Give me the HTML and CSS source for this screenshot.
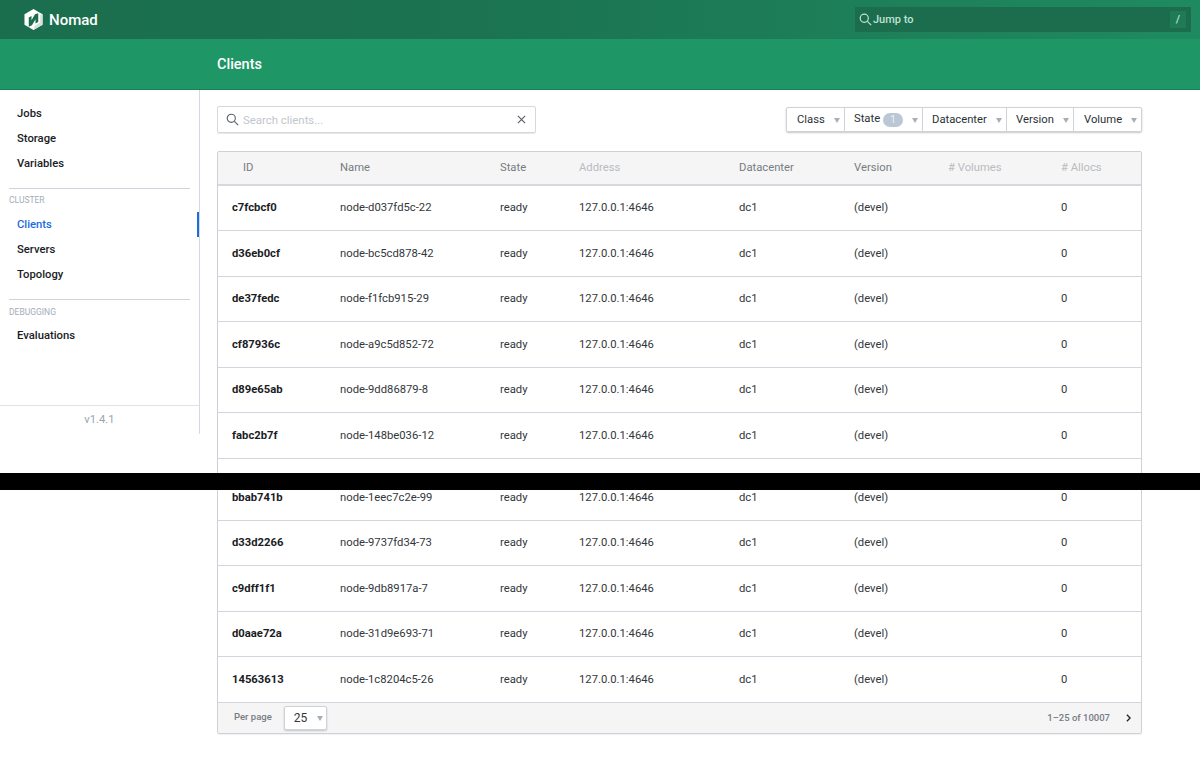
FILE: index.html
```html
<!DOCTYPE html>
<html lang="en">
<head>
<meta charset="utf-8">
<title>Clients - Nomad</title>
<link rel="stylesheet" href="styles.css">
</head>
<body>
<header class="topbar">
  <a class="brand">
    <svg class="logo" viewBox="0 0 20 22" width="19" height="21"><path fill="#fff" d="M10 0l9.500 5.400v11L10 22 .5 16.400v-11z"/><path fill="#d4e2dc" d="M19.500 5.400v11L10 22l1-4 6-4V6z"/><path fill="#1b6e4c" d="M5 9l2.900-1.700v4.600l3.700-6.500L15 4.400v9.200l-2.900 1.700v-4.500l-3.700 6.300L5 18.500z"/></svg>
    <span>Nomad</span>
  </a>
  <div class="jump">
    <svg class="jump-icon" viewBox="0 0 16 16" width="13" height="13"><circle cx="6.500" cy="6.500" r="5" fill="none" stroke="currentColor" stroke-width="1.500"/><path d="M10.300 10.300L15 15" stroke="currentColor" stroke-width="1.500"/></svg>
    <span class="jump-label">Jump to</span>
    <span class="jump-key">/</span>
  </div>
</header>
<div class="subbar"><h1>Clients</h1></div>
<div class="page">
  <nav class="sidebar">
    <ul class="menu menu-first">
      <li>Jobs</li>
      <li>Storage</li>
      <li>Variables</li>
    </ul>
    <p class="menu-label">Cluster</p>
    <ul class="menu">
      <li class="active">Clients</li>
      <li>Servers</li>
      <li>Topology</li>
    </ul>
    <p class="menu-label menu-label-debug">Debugging</p>
    <ul class="menu">
      <li>Evaluations</li>
    </ul>
    <footer class="version">v1.4.1</footer>
  </nav>
  <main class="content">
    <div class="toolbar">
      <div class="search">
        <svg class="search-icon" viewBox="0 0 16 16" width="13" height="13"><circle cx="6.500" cy="6.500" r="5" fill="none" stroke="currentColor" stroke-width="1.400"/><path d="M10.300 10.300L15 15" stroke="currentColor" stroke-width="1.400"/></svg>
        <span class="placeholder">Search clients...</span>
        <svg class="clear-icon" viewBox="0 0 10 10" width="9" height="9"><path d="M1 1l8 8M9 1l-8 8" stroke="currentColor" stroke-width="1.300"/></svg>
      </div>
      <div class="filters">
        <div class="filter f-class">Class</div>
        <div class="filter f-state"><span class="state-label">State</span><span class="badge">1</span></div>
        <div class="filter f-dc">Datacenter</div>
        <div class="filter f-version">Version</div>
        <div class="filter f-volume">Volume</div>
      </div>
    </div>
    <div class="table">
      <div class="row head">
        <div class="id-head">ID</div><div>Name</div><div>State</div><div class="muted">Address</div><div>Datacenter</div><div>Version</div><div class="muted"># Volumes</div><div class="muted"># Allocs</div>
      </div>
      <div class="row"><div class="id">c7fcbcf0</div><div>node-d037fd5c-22</div><div>ready</div><div>127.0.0.1:4646</div><div>dc1</div><div>(devel)</div><div></div><div>0</div></div>
      <div class="row"><div class="id">d36eb0cf</div><div>node-bc5cd878-42</div><div>ready</div><div>127.0.0.1:4646</div><div>dc1</div><div>(devel)</div><div></div><div>0</div></div>
      <div class="row"><div class="id">de37fedc</div><div>node-f1fcb915-29</div><div>ready</div><div>127.0.0.1:4646</div><div>dc1</div><div>(devel)</div><div></div><div>0</div></div>
      <div class="row"><div class="id">cf87936c</div><div>node-a9c5d852-72</div><div>ready</div><div>127.0.0.1:4646</div><div>dc1</div><div>(devel)</div><div></div><div>0</div></div>
      <div class="row"><div class="id">d89e65ab</div><div>node-9dd86879-8</div><div>ready</div><div>127.0.0.1:4646</div><div>dc1</div><div>(devel)</div><div></div><div>0</div></div>
      <div class="row"><div class="id">fabc2b7f</div><div>node-148be036-12</div><div>ready</div><div>127.0.0.1:4646</div><div>dc1</div><div>(devel)</div><div></div><div>0</div></div>
      <div class="row seam"><div class="id">bbab741b</div><div>node-1eec7c2e-99</div><div>ready</div><div>127.0.0.1:4646</div><div>dc1</div><div>(devel)</div><div></div><div>0</div></div>
      <div class="row"><div class="id">d33d2266</div><div>node-9737fd34-73</div><div>ready</div><div>127.0.0.1:4646</div><div>dc1</div><div>(devel)</div><div></div><div>0</div></div>
      <div class="row"><div class="id">c9dff1f1</div><div>node-9db8917a-7</div><div>ready</div><div>127.0.0.1:4646</div><div>dc1</div><div>(devel)</div><div></div><div>0</div></div>
      <div class="row"><div class="id">d0aae72a</div><div>node-31d9e693-71</div><div>ready</div><div>127.0.0.1:4646</div><div>dc1</div><div>(devel)</div><div></div><div>0</div></div>
      <div class="row"><div class="id">14563613</div><div>node-1c8204c5-26</div><div>ready</div><div>127.0.0.1:4646</div><div>dc1</div><div>(devel)</div><div></div><div>0</div></div>
      <div class="pager">
        <span class="per-label">Per page</span>
        <div class="per-select">25</div>
        <span class="range">1–25 of 10007</span>
        <svg class="next" viewBox="0 0 6 10" width="5" height="8"><path d="M1 1l4 4-4 4" fill="none" stroke="currentColor" stroke-width="1.800"/></svg>
      </div>
    </div>
  </main>
</div>
<div class="seam-bar"></div>
</body>
</html>
```
FILE: styles.css
```css
* { box-sizing: border-box; }
html, body { margin: 0; padding: 0; }
body {
  width: 1200px;
  height: 760px;
  overflow: hidden;
  position: relative;
  background: #fff;
  color: #1f2124;
  font-family: Roboto, "Liberation Sans", sans-serif;
  font-size: 11.250px;
}
ul { list-style: none; margin: 0; padding: 0; }
p, h1 { margin: 0; }

.topbar {
  height: 39px;
  background: linear-gradient(to right, #1b6e4d, #1b7351 40%, #1f8a60);
  display: flex;
  align-items: center;
  justify-content: space-between;
  padding: 0 9px 0 24px;
}
.brand {
  display: flex;
  align-items: center;
  gap: 6px;
  color: #fff;
  font-size: 15px;
  font-weight: 500;
}
.logo { display: block; }
.jump {
  width: 336px;
  height: 25px;
  margin-top: -1px;
  display: flex;
  align-items: center;
  padding: 0 4px;
  background: #1b6d4e;
  color: #bfe3d2;
  font-size: 11px;
  font-weight: 500;
}
.jump-icon { margin-right: 1px; }
.jump-label { flex: 1; }
.jump-key {
  width: 16px;
  height: 17px;
  background: #1f7a56;
  text-align: center;
  line-height: 17px;
  margin-right: 1px;
}

.subbar {
  height: 51px;
  background: #1f9666;
  border-bottom: 1px solid #1a8059;
  padding: 1px 0 0 217px;
  display: flex;
  align-items: center;
}
.subbar h1 {
  color: #fff;
  font-size: 14.500px;
  font-weight: 500;
}

.page { display: flex; align-items: flex-start; }

.sidebar {
  width: 200px;
  height: 344px;
  border-right: 1px solid #d3d9e0;
  display: flex;
  flex-direction: column;
  flex: none;
}
.menu li {
  height: 25px;
  line-height: 25px;
  padding-left: 17px;
  font-weight: 500;
  color: #1a1c1f;
}
.menu-first { padding-top: 11px; }
.menu-label {
  margin: 12px 9px 0;
  border-top: 1px solid #ced4db;
  padding-top: 6px;
  height: 24px;
  font-size: 8.500px;
  line-height: 10px;
  text-transform: uppercase;
  color: #a3acb8;
}
.menu-label-debug { padding-top: 7px; }
.menu li.active {
  color: #1c6ce0;
  box-shadow: inset -2px 0 0 #1c6ce0;
}
.version {
  margin-top: auto;
  height: 29px;
  border-top: 1px solid #dfe3e8;
  text-align: center;
  line-height: 28px;
  color: #9ca5b0;
}

.content { width: 925px; margin-left: 17px; padding-top: 16px; flex: none; }
.toolbar { display: flex; justify-content: space-between; align-items: flex-start; height: 45px; }
.search {
  width: 319px;
  height: 27px;
  border: 1px solid #d5d9de;
  border-radius: 2px;
  display: flex;
  align-items: center;
  padding: 0 10px 0 8px;
  color: #5d636b;
  box-shadow: 0 1px 0 #e6e8eb;
}
.search-icon { margin-right: 4px; }
.placeholder { flex: 1; color: #c2c6cd; font-size: 11.400px; }
.clear-icon { color: #5a6068; margin-right: -1px; }

.filters {
  display: flex;
  height: 25px;
  margin-top: 1px;
  border: 1px solid #cfd3d8;
  border-radius: 2px;
  box-shadow: 0 1px 2px rgba(0, 0, 0, .22);
}
.filter {
  position: relative;
  display: flex;
  align-items: center;
  padding-left: 9px;
  color: #2c3036;
  border-right: 1px solid #cfd3d8;
}
.filter:last-child { border-right: 0; }
.filter::after {
  content: "";
  position: absolute;
  right: 4px;
  top: 10px;
  border: 3.500px solid transparent;
  border-top: 5px solid #a9aeb5;
  border-bottom: 0;
}
.f-class { width: 58px; padding-left: 10px; }
.f-state { width: 78px; }
.f-dc { width: 84px; }
.f-version { width: 67px; }
.f-volume { width: 67px; padding-left: 10px; }
.state-label { margin-top: -3px; }
.badge {
  width: 20px;
  height: 14px;
  margin-left: 3px;
  border-radius: 7px;
  background: #bcc7d6;
  color: #eef1f5;
  font-size: 10px;
  line-height: 14px;
  text-align: center;
}

.table {
  width: 925px;
  border: 1px solid #ccd2d9;
  border-radius: 2px;
  box-shadow: 0 1px 1px rgba(0, 0, 0, .06);
}
.row {
  height: 45.500px;
  display: grid;
  grid-template-columns: 108px 160px 79px 160px 115px 94px 113px 94px;
  align-items: center;
  border-bottom: 1px solid #d0d6dd;
  color: #33373c;
}
.row > div { padding-left: 14px; }
.row .id { font-weight: 700; color: #1a1c1f; }
.row.head {
  height: 33.500px;
  background: #f5f5f5;
  border-bottom: 2px solid #d5d9de;
  color: #777c83;
}
.row .id-head { padding-left: 25px; }
.row .muted { color: #b9bcc1; }
.row.seam { height: 62px; padding-top: 16px; }
.pager {
  height: 30.500px;
  background: #f5f5f5;
  display: flex;
  align-items: center;
  color: #777c83;
  font-size: 9.500px;
  font-weight: 500;
  padding: 0 10px 0 16px;
}
.per-label { margin-top: -3px; }
.per-select {
  position: relative;
  width: 43px;
  height: 24px;
  margin-left: 12px;
  background: #fff;
  border: 1px solid #cfd3d8;
  border-radius: 2px;
  box-shadow: 0 1px 2px rgba(0, 0, 0, .2);
  color: #33373c;
  font-size: 12px;
  font-weight: 400;
  line-height: 23px;
  padding-left: 9px;
}
.per-select::after {
  content: "";
  position: absolute;
  right: 3px;
  top: 9px;
  border: 3.500px solid transparent;
  border-top: 5px solid #a9aeb5;
  border-bottom: 0;
}
.range { margin-left: auto; margin-right: 16px; }
.next { color: #25282c; margin-top: 1px; }

.seam-bar {
  position: absolute;
  left: 0;
  top: 473px;
  width: 1200px;
  height: 17px;
  background: #000;
}
```
